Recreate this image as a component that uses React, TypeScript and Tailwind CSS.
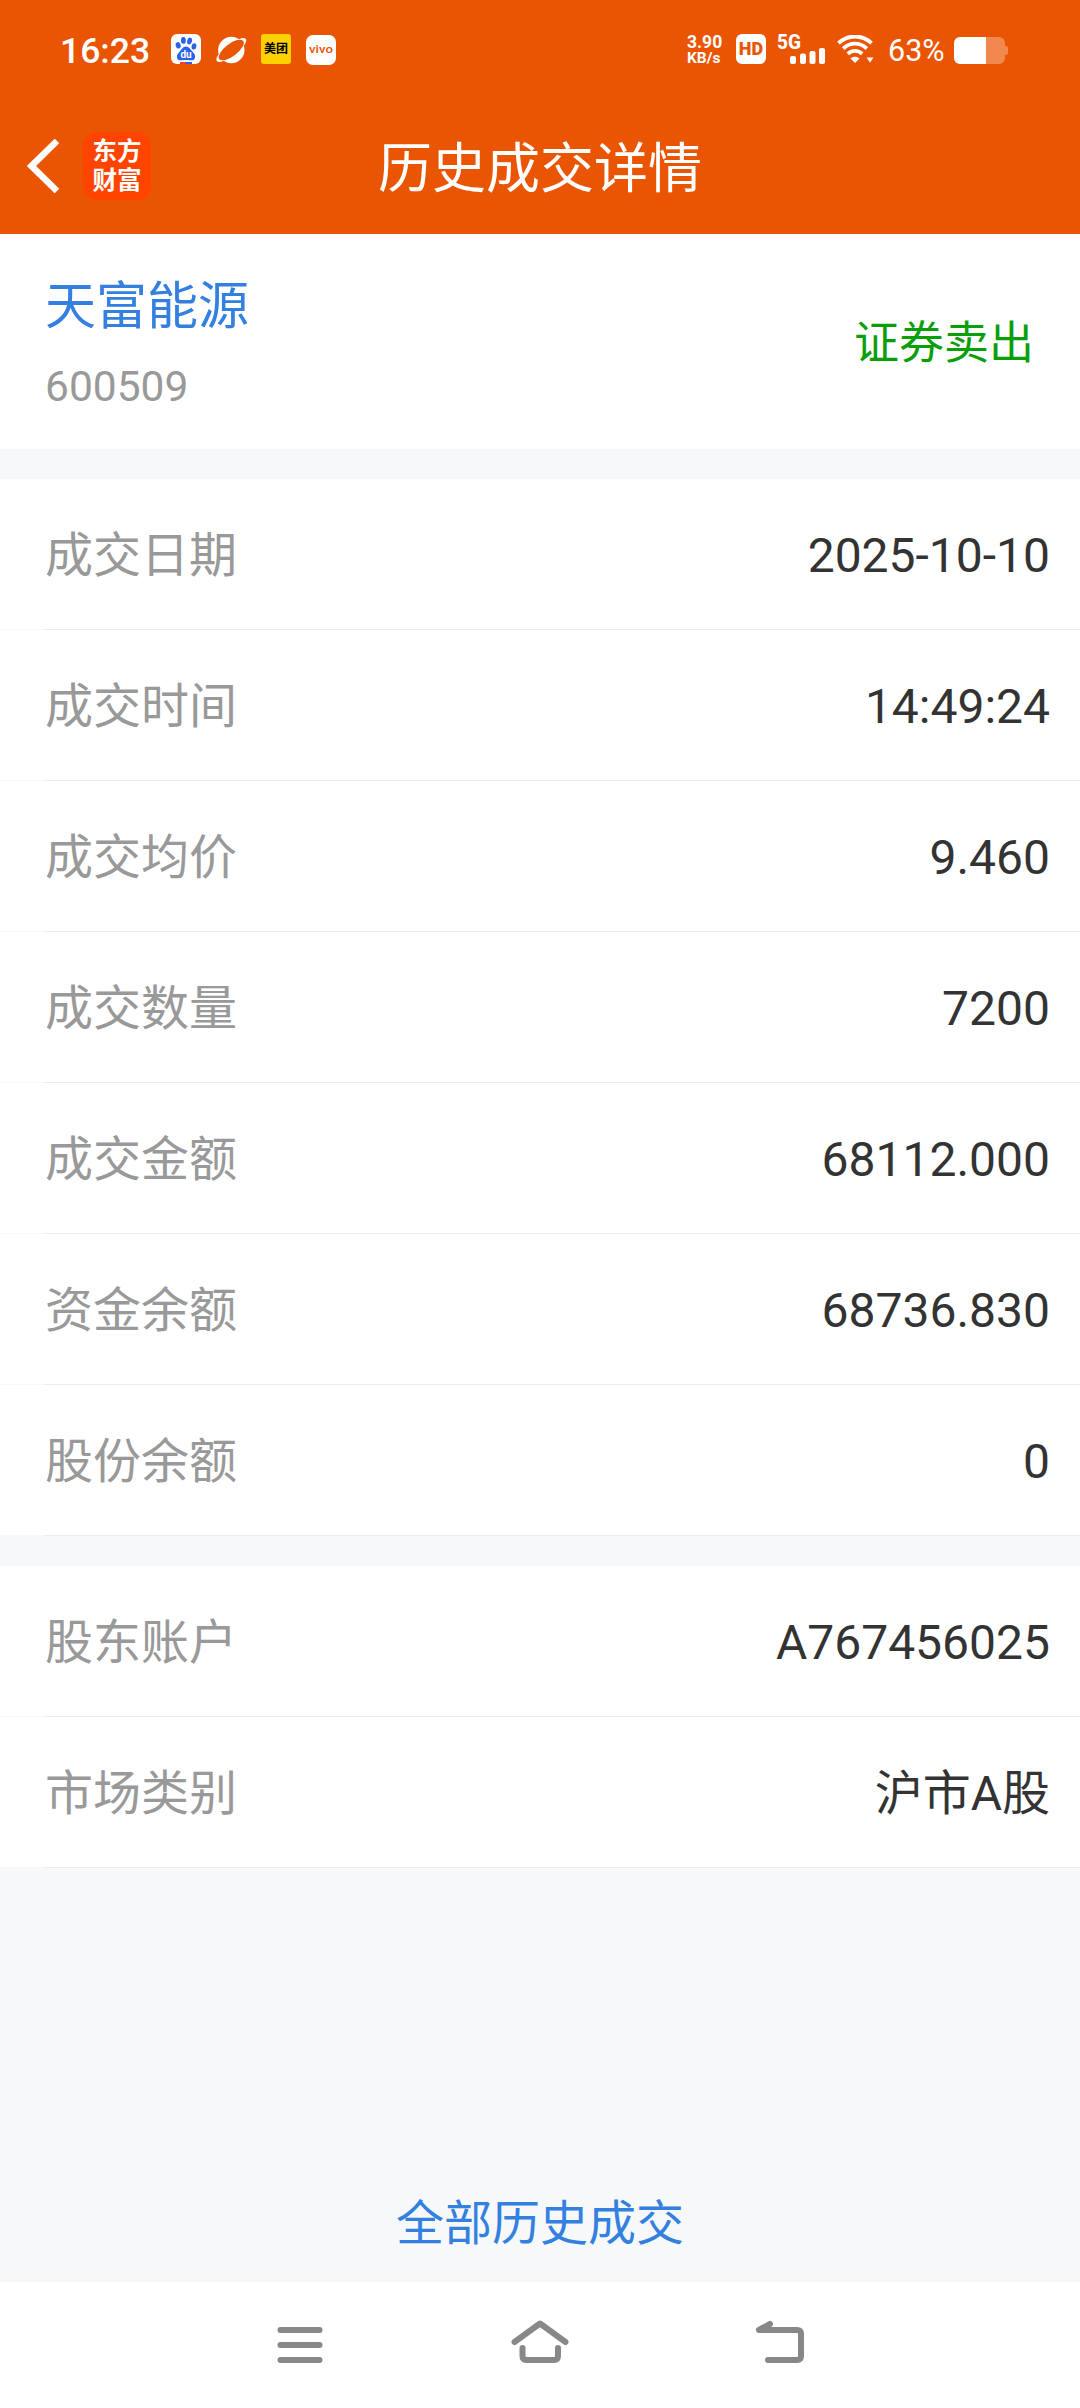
type Item = { label: string; value: string };

const trade: Item[] = [
  { label: "成交日期", value: "2025-10-10" },
  { label: "成交时间", value: "14:49:24" },
  { label: "成交均价", value: "9.460" },
  { label: "成交数量", value: "7200" },
  { label: "成交金额", value: "68112.000" },
  { label: "资金余额", value: "68736.830" },
  { label: "股份余额", value: "0" },
];

const account: Item[] = [
  { label: "股东账户", value: "A767456025" },
  { label: "市场类别", value: "沪市A股" },
];

function BaiduIcon() {
  return (
    <svg className="h-[30px] w-[30px]" viewBox="0 0 30 30">
      <rect width="30" height="30" rx="6" fill="#fff" />
      <g fill="#2a62e8">
        <ellipse cx="7.2" cy="11.3" rx="2.5" ry="3.2" transform="rotate(-15 7.2 11.3)" />
        <ellipse cx="12.4" cy="6.4" rx="2.4" ry="3.4" />
        <ellipse cx="18.6" cy="7" rx="2.4" ry="3.4" transform="rotate(15 18.6 7)" />
        <ellipse cx="23" cy="12.4" rx="2.4" ry="3.2" transform="rotate(10 23 12.4)" />
        <path d="M15 12.5c3 0 4.4 3 6.5 5.200 2.200 2.200 3.200 4 2.400 6.200-.8 2.300-3.200 2.600-5.400 2.300-2.400-.4-4.600-.4-7 0-2.200.3-4.700 0-5.400-2.300-.7-2.200.4-4 2.500-6.200C10.600 15.500 12 12.500 15 12.500z" />
        <rect x="15" y="28" width="6" height="2" />
      </g>
      <rect x="9" y="28" width="6" height="2" fill="#e8413a" />
      <text x="15" y="24" textAnchor="middle" fontSize="10" fontWeight="700" fontFamily="Roboto, sans-serif" fill="#fff">du</text>
    </svg>
  );
}

function PlanetIcon() {
  return (
    <svg className="h-[30px] w-[30px] overflow-visible" viewBox="0 0 30 30">
      <circle cx="15.300" cy="16" r="13.200" fill="#fff" />
      <g transform="rotate(-37 15.3 16)">
        <ellipse cx="15.300" cy="16" rx="18.200" ry="5.800" fill="#fff" />
        <ellipse cx="15.300" cy="16" rx="15" ry="6.200" fill="#ea5504" />
      </g>
    </svg>
  );
}

function VivoIcon() {
  return (
    <svg className="mt-[2px] h-[30px] w-[30px]" viewBox="0 0 30 30">
      <rect width="30" height="30" rx="7" fill="#fff" />
      <text x="3" y="18" fontSize="10.5" fontWeight="500" fontFamily="Roboto, sans-serif" fill="#ea5504" textLength="24" lengthAdjust="spacingAndGlyphs">vivo</text>
    </svg>
  );
}

function WifiIcon() {
  return (
    <svg className="h-7 w-[37px]" viewBox="0 0 37 28">
      <g fill="none" stroke="#fff" strokeWidth="3.900">
        <path d="M1.500 8.200C11 -.8 25 -.8 34.500 8.200" />
        <path d="M6.200 13.600C13 7 23 7 29.800 13.600" />
        <path d="M10.800 18.900C15 14.900 21 14.900 25.200 18.900" />
      </g>
      <path d="M13.500 23.500C16 21.300 20 21.300 22.500 23.500L18 28z" fill="#fff" />
      <path d="M29.500 22.500h7L33 27.500z" fill="#fff" />
    </svg>
  );
}

function StatusBar() {
  return (
    <div className="flex h-[98px] items-center pl-[60px] pr-[72px] text-white">
      <span className="mt-[5px] w-[92px] text-[35.5px] font-medium leading-none">16:23</span>
      <div className="ml-[19px] flex items-center gap-[15px]">
        <BaiduIcon />
        <PlanetIcon />
        <span className="flex h-[30px] w-[30px] items-center justify-center rounded-[3px] bg-[#ffd100] text-[12px] font-bold leading-none text-black">
          美团
        </span>
        <VivoIcon />
      </div>

      <div className="ml-auto flex items-center">
        <div className="mt-[2px] w-[49px] text-[17.5px] font-bold leading-4">
          <div>3.90</div>
          <div className="text-[15.5px]">KB/s</div>
        </div>
        <span className="flex h-[30px] w-[30px] items-center justify-center rounded-[6px] bg-white text-[18px] font-black leading-none text-[#ea5504]">
          HD
        </span>
        <svg className="ml-[11px] h-[30px] w-[50px] overflow-visible" viewBox="0 0 50 30">
          <text x="0" y="14.500" fontSize="20" fontWeight="800" fontFamily="Roboto, sans-serif" fill="#fff" textLength="24" lengthAdjust="spacingAndGlyphs">5G</text>
          <g fill="#fff">
            <rect x="13" y="22" width="6" height="8" rx="2" />
            <rect x="23" y="19.500" width="6" height="10.500" rx="2" />
            <rect x="32.500" y="17" width="6" height="13" rx="2" />
            <rect x="42" y="14" width="6" height="16" rx="2" />
          </g>
        </svg>
        <div className="ml-[10px]">
          <WifiIcon />
        </div>
        <span className="ml-[14px] mt-[4px] w-[66px] text-[30.5px] leading-none">63%</span>
        <svg className="mt-[3px] h-[27px] w-[54px]" viewBox="0 0 54 27">
          <rect width="51" height="27" rx="6" fill="#f1884d" />
          <path d="M51 9h1a2 2 0 0 1 2 2v5a2 2 0 0 1-2 2h-1z" fill="#f1884d" />
          <path d="M6 0h26v27H6a6 6 0 0 1-6-6V6a6 6 0 0 1 6-6z" fill="#fff" />
        </svg>
      </div>
    </div>
  );
}

function TitleBar() {
  return (
    <div className="grid h-[136px] grid-cols-[1fr_auto_1fr] items-center">
      <div className="flex items-center pl-[27px]">
        <svg className="h-[54px] w-8" viewBox="0 0 32 54" fill="none" stroke="#fff" strokeWidth="6.500">
          <path d="M30 2L4.500 27L30 52" />
        </svg>
        <div className="ml-6 flex h-[68px] w-[68px] flex-col items-center justify-center rounded-[14px] bg-[#ff4400] text-[24.5px] font-bold leading-[29px] text-white">
          <span>东方</span>
          <span>财富</span>
        </div>
      </div>
      <h1 className="pt-[7px] text-[54px] leading-none text-white">历史成交详情</h1>
    </div>
  );
}

function Rows({ items }: { items: Item[] }) {
  return (
    <section className="bg-white">
      {items.map((it) => (
        <div key={it.label}>
          <div className="flex h-[150px] items-center justify-between pl-[45px] pr-[30px] pt-[3px] text-[48px]">
            <span className="text-[#999999]">{it.label}</span>
            <span className="text-[#333333]">{it.value}</span>
          </div>
          <div className="bg-[#f6f8fa] pl-[45px]">
            <div className="h-px bg-[#ebebeb]" />
          </div>
        </div>
      ))}
    </section>
  );
}

function NavBar() {
  return (
    <nav className="flex h-[126px] items-center justify-center gap-[180px] bg-white">
      <svg className="h-[60px] w-[60px]" viewBox="0 0 60 60" fill="none" stroke="#888" strokeWidth="6" strokeLinecap="round">
        <path d="M10.500 15h39M10.500 30h39M10.500 45h39" />
      </svg>
      <svg className="h-[60px] w-[60px]" viewBox="0 0 60 60" fill="none" stroke="#888" strokeWidth="6" strokeLinecap="round" strokeLinejoin="round">
        <path d="M4.500 27L30 8.500L55.500 27M12.500 33v8q0 4 4 4h27.500q4 0 4-4v-8" />
      </svg>
      <svg className="h-[60px] w-[60px]" viewBox="0 0 60 60" fill="none" stroke="#888" strokeWidth="6" strokeLinecap="round" strokeLinejoin="round">
        <path d="M20 9L9 15h38q4 0 4 4v22q0 4-4 4H18" />
      </svg>
    </nav>
  );
}

export default function App() {
  return (
    <div className="flex h-[2408px] w-[1080px] flex-col overflow-hidden bg-[#f6f8fa] font-[Roboto,'Noto_Sans_CJK_SC',sans-serif]">
      <header className="bg-[#ea5504]">
        <StatusBar />
        <TitleBar />
      </header>

      <section className="flex h-[215px] items-center justify-between bg-white pl-[45px] pr-[46px]">
        <div className="pt-[11px]">
          <div className="text-[51px] leading-[72px] text-[#3380e0]">天富能源</div>
          <div className="mt-2 text-[42.5px] leading-[72px] text-[#999999]">600509</div>
        </div>
        <span className="pt-[5px] text-[45px] text-[#0a9f0a]">证券卖出</span>
      </section>

      <main className="mt-[30px] flex flex-col gap-[30px]">
        <Rows items={trade} />
        <Rows items={account} />
      </main>

      <div className="mt-auto flex h-[118px] items-center justify-center pt-px text-[48px] text-[#3380e0]">
        全部历史成交
      </div>
      <NavBar />
    </div>
  );
}
